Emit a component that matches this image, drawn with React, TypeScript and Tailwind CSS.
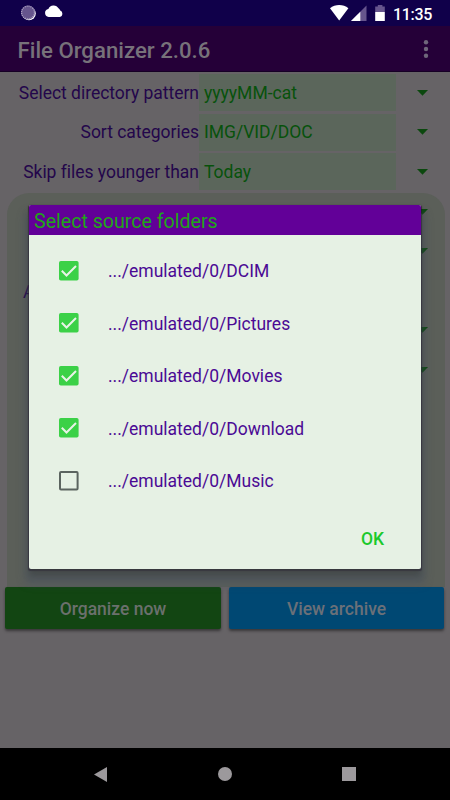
import React from "react";

const settings = [
  { label: "Select directory pattern", value: "yyyyMM-cat" },
  { label: "Sort categories", value: "IMG/VID/DOC" },
  { label: "Skip files younger than", value: "Today" },
];

const folders = [
  { name: "DCIM", checked: true },
  { name: "Pictures", checked: true },
  { name: "Movies", checked: true },
  { name: "Download", checked: true },
  { name: "Music", checked: false },
];

function Caret() {
  return (
    <svg width="11" height="6" viewBox="0 0 11 6" className="shrink-0">
      <path d="M0 0H11L5.5 5.7Z" fill="#0b480e" />
    </svg>
  );
}

function StatusBar() {
  return (
    <div className="flex h-[26px] items-center bg-[#10004a] pl-5">
      <svg width="50" height="26" viewBox="0 0 50 26">
        <circle cx="9" cy="13.5" r="6.8" fill="#fff" />
        <circle cx="8" cy="12.5" r="7" fill="#66558d" />
        <circle cx="8" cy="12.5" r="6.4" fill="none" stroke="#b5abc9" strokeWidth="1.2" strokeDasharray="1 1" />
        <path d="M29.8 17.3a3.8 3.8 0 0 1-.3-7.5 5.2 5.2 0 0 1 9.4-.5 4 4 0 0 1 1.6 2.1 3.1 3.1 0 0 1-.3 5.9Z" transform="translate(-3.500 -1.700) scale(1.080)" fill="#fff" />
      </svg>
      <svg width="58" height="26" viewBox="0 0 58 26" className="ml-[260px]">
        <path d="M0 8.3C5.2 4 13.2 4 18.4 8.3L9.2 20.5Z" fill="#fff" />
        <path d="M36.5 5.5V21H21Z" fill="#66558d" />
        <path d="M30.3 11.7V21H21Z" fill="#fff" />
        <path d="M47.8 5h4.6v1.6h2.4V12h-9.6V6.600h2.600Z" fill="#66558d" />
        <path d="M45.200 12h9.600v9h-9.600Z" fill="#fff" />
      </svg>
      <span className="ml-[5px] pt-[3px] text-[16px] leading-[24px] font-medium tracking-[-0.300px] text-white">11:35</span>
    </div>
  );
}

function Toolbar() {
  return (
    <div className="flex h-[46px] items-center justify-between border-b border-[#160025] bg-[#250038] pr-[21px] pl-[17.500px]">
      <h1 className="pt-[2px] text-[22.200px] leading-[28px] font-medium text-[#77727a]">File Organizer 2.0.6</h1>
      <svg width="6" height="20" viewBox="0 0 6 20" fill="#6f667b">
        <circle cx="3" cy="3.300" r="2.200" />
        <circle cx="3" cy="10" r="2.200" />
        <circle cx="3" cy="16.700" r="2.200" />
      </svg>
    </div>
  );
}

function Dialog() {
  return (
    <div className="absolute top-[205px] left-[29px] flex h-[363.500px] w-[392px] flex-col overflow-hidden rounded-[2px] bg-[#e6f1e4] shadow-[0_7px_6px_rgba(55,58,50,0.45),0_11px_8px_4px_rgba(65,78,100,0.4),0_1px_1px_0.5px_rgba(25,10,30,0.6)]">
      <h2 className="h-[30px] shrink-0 bg-[#620098] pl-[5px] text-[19.600px] leading-[33px] text-[#1fa618]">Select source folders</h2>
      <ul className="pt-[9px]">
        {folders.map((folder) => (
          <li key={folder.name} className="flex h-[52.500px] items-center pl-[30px]">
            <svg width="20" height="20" viewBox="0 0 20 20" className="mt-px shrink-0">
              {folder.checked ? (
                <>
                  <rect width="19.600" height="19.600" rx="1.800" fill="#3bd147" />
                  <path d="m2.800 9.800 4.700 4.700 9.500-9.500" fill="none" stroke="#e9f3e7" strokeWidth="2" />
                </>
              ) : (
                <rect x="1" y="1" width="17.600" height="17.600" rx="1" fill="none" stroke="#5b645f" strokeWidth="2" />
              )}
            </svg>
            <span className="ml-[29px] pt-[2px] text-[17.500px] text-[#4b0a94]">.../emulated/0/{folder.name}</span>
          </li>
        ))}
      </ul>
      <button className="mt-auto mr-[37px] mb-[18px] self-end text-[17.500px] leading-[24px] font-medium text-[#1bc92b]">OK</button>
    </div>
  );
}

export default function App() {
  return (
    <div className="relative flex h-[800px] w-[450px] flex-col overflow-hidden bg-[#666366] font-['Roboto',sans-serif]">
      <StatusBar />
      <Toolbar />
      <main className="flex flex-1 flex-col pt-px">
        {settings.map((row) => (
          <div key={row.label} className="flex h-[39.500px] items-center">
            <span className="w-[199px] text-right text-[17.500px] tracking-[-0.020px] whitespace-nowrap text-[#23064b]">{row.label}</span>
            <div className="flex h-[37px] w-[197px] items-center bg-[#5b665b] pl-[5px] text-[17.500px] text-[#07520b]">{row.value}</div>
            <div className="ml-[21px]"><Caret /></div>
          </div>
        ))}
        <section className="mt-[1.500px] mr-[5px] ml-[7px] h-[393.500px] shrink-0 rounded-t-[22px] bg-[#5b5f59] pt-[15.500px]">
          <div className="flex h-[39.600px] justify-end pr-[17px]"><Caret /></div>
          <div className="flex h-[39.600px] justify-end pr-[17px]"><Caret /></div>
          <div className="flex h-[39.600px] items-start pl-[16px]">
            <span className="-mt-[6px] text-[17.500px] leading-[20px] text-[#23064b]">Archive folder</span>
          </div>
          <div className="flex h-[39.600px] justify-end pr-[17px]"><Caret /></div>
          <div className="flex h-[39.600px] justify-end pr-[17px]"><Caret /></div>
        </section>
        <div className="flex gap-[8px] px-[5px]">
          <button className="h-[42px] w-[216px] rounded-[2px] bg-[#124512] pt-[3px] text-[17.500px] font-medium text-[#6b706d] shadow-[0_2px_3px_rgba(0,0,0,0.45)]">Organize now</button>
          <button className="h-[42px] w-[215px] rounded-[2px] bg-[#004873] pt-[3px] text-[17.500px] font-medium text-[#6b7078] shadow-[0_2px_3px_rgba(0,0,0,0.45)]">View archive</button>
        </div>
      </main>
      <nav className="flex h-[52px] items-center bg-black pl-[94px]">
        <svg width="13" height="15" viewBox="0 0 13 15"><path d="M13 0V15L0 7.500Z" fill="#9c999c" /></svg>
        <div className="ml-[111px] size-[14px] rounded-full bg-[#9c999c]" />
        <div className="ml-[110px] size-[14px] bg-[#9c999c]" />
      </nav>
      <Dialog />
    </div>
  );
}
